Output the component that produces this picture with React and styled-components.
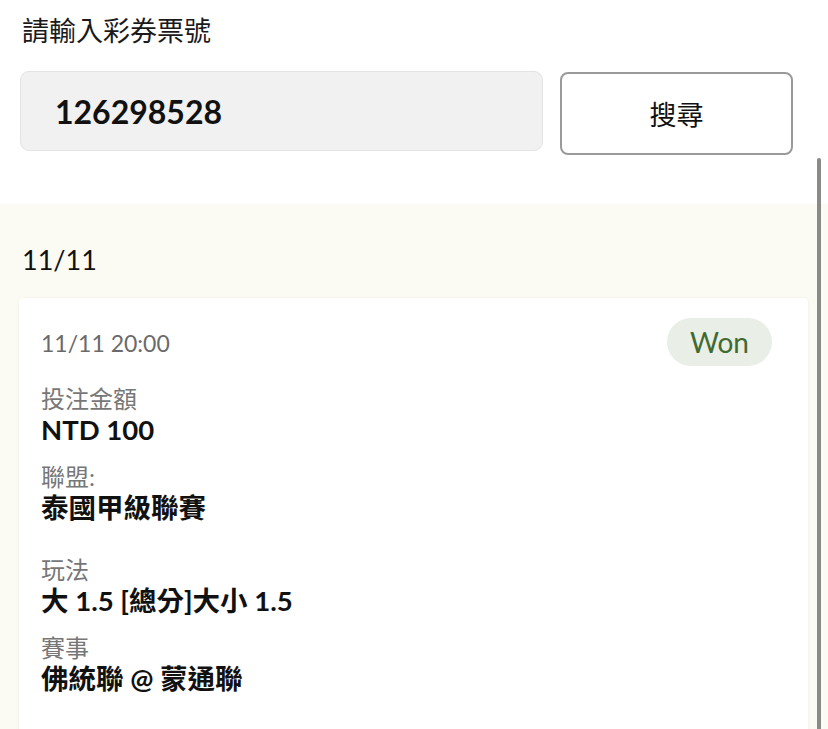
import React from "react";
import styled, { createGlobalStyle } from "styled-components";

const GlobalStyle = createGlobalStyle`
  html, body {
    margin: 0;
    padding: 0;
    background: #ffffff;
    font-family: Lato, "Noto Sans CJK TC", sans-serif;
    color: #111111;
    overflow: hidden;
  }
`;

const Page = styled.div`
  position: relative;
  width: 828px;
  height: 729px;
  overflow: hidden;
`;

const SearchArea = styled.div`
  padding: 13px 35px 0 20px;
`;

const Title = styled.div`
  padding-left: 2px;
  font-size: 27px;
  line-height: 36px;
  color: #1a1a1a;
`;

const SearchRow = styled.div`
  display: flex;
  align-items: flex-start;
  gap: 17px;
  margin-top: 22px;
`;

const TicketInput = styled.div`
  flex: 1;
  box-sizing: border-box;
  height: 80px;
  display: flex;
  align-items: center;
  padding-left: 34px;
  background: #f1f1f1;
  border: 1px solid #e3e3e3;
  border-radius: 9px;
  font-size: 32px;
  font-weight: 700;
  color: #111111;
`;

const SearchButton = styled.button`
  box-sizing: border-box;
  width: 233px;
  height: 83px;
  margin-top: 1px;
  background: #ffffff;
  border: 2px solid #9a9a9a;
  border-radius: 8px;
  font-family: Lato, "Noto Sans CJK TC", sans-serif;
  font-size: 27px;
  color: #111111;
`;

const Results = styled.section`
  margin-top: 49px;
  padding: 38px 20px 0 19px;
  background: #fbfbf4;
  height: 600px;
`;

const DateHeading = styled.div`
  padding-left: 3px;
  font-size: 27px;
  line-height: 36px;
  color: #111111;
`;

const Card = styled.div`
  margin-top: 20px;
  padding: 20px 36px 20px 22px;
  background: #ffffff;
  border-radius: 4px;
  box-shadow: 0 0 3px rgba(0, 0, 0, 0.06);
  min-height: 500px;
`;

const CardHeader = styled.div`
  display: flex;
  justify-content: space-between;
  align-items: center;
  margin-bottom: 18px;
`;

const Time = styled.div`
  margin-top: 2px;
  font-size: 23px;
  color: #6a6a6a;
`;

const StatusPill = styled.div`
  height: 48px;
  padding: 0 23px;
  display: flex;
  align-items: center;
  border-radius: 24px;
  background: #e9eee6;
  color: #3f6a31;
  font-size: 28px;
`;

const Field = styled.div`
  margin-bottom: ${({ $gap }) => $gap}px;
`;

const Label = styled.div`
  font-size: 24px;
  line-height: 30px;
  color: #777777;
`;

const Value = styled.div`
  font-size: 27.5px;
  line-height: 32px;
  font-weight: 700;
  color: #111111;
`;

const ScrollThumb = styled.div`
  position: absolute;
  top: 158px;
  right: 7px;
  width: 4px;
  height: 600px;
  border-radius: 2px;
  background: #8a8a86;
`;

const fields = [
  { label: "投注金額", value: "NTD 100", gap: 16 },
  { label: "聯盟:", value: "泰國甲級聯賽", gap: 31 },
  { label: "玩法", value: "大 1.5 [總分]大小 1.5", gap: 16 },
  { label: "賽事", value: "佛統聯 @ 蒙通聯", gap: 16 },
];

function App() {
  return (
    <Page>
      <GlobalStyle />
      <SearchArea>
        <Title>請輸入彩券票號</Title>
        <SearchRow>
          <TicketInput>126298528</TicketInput>
          <SearchButton>搜尋</SearchButton>
        </SearchRow>
      </SearchArea>
      <Results>
        <DateHeading>11/11</DateHeading>
        <Card>
          <CardHeader>
            <Time>11/11 20:00</Time>
            <StatusPill>Won</StatusPill>
          </CardHeader>
          {fields.map((field) => (
            <Field key={field.label} $gap={field.gap}>
              <Label>{field.label}</Label>
              <Value>{field.value}</Value>
            </Field>
          ))}
        </Card>
      </Results>
      <ScrollThumb />
    </Page>
  );
}

export default App;
